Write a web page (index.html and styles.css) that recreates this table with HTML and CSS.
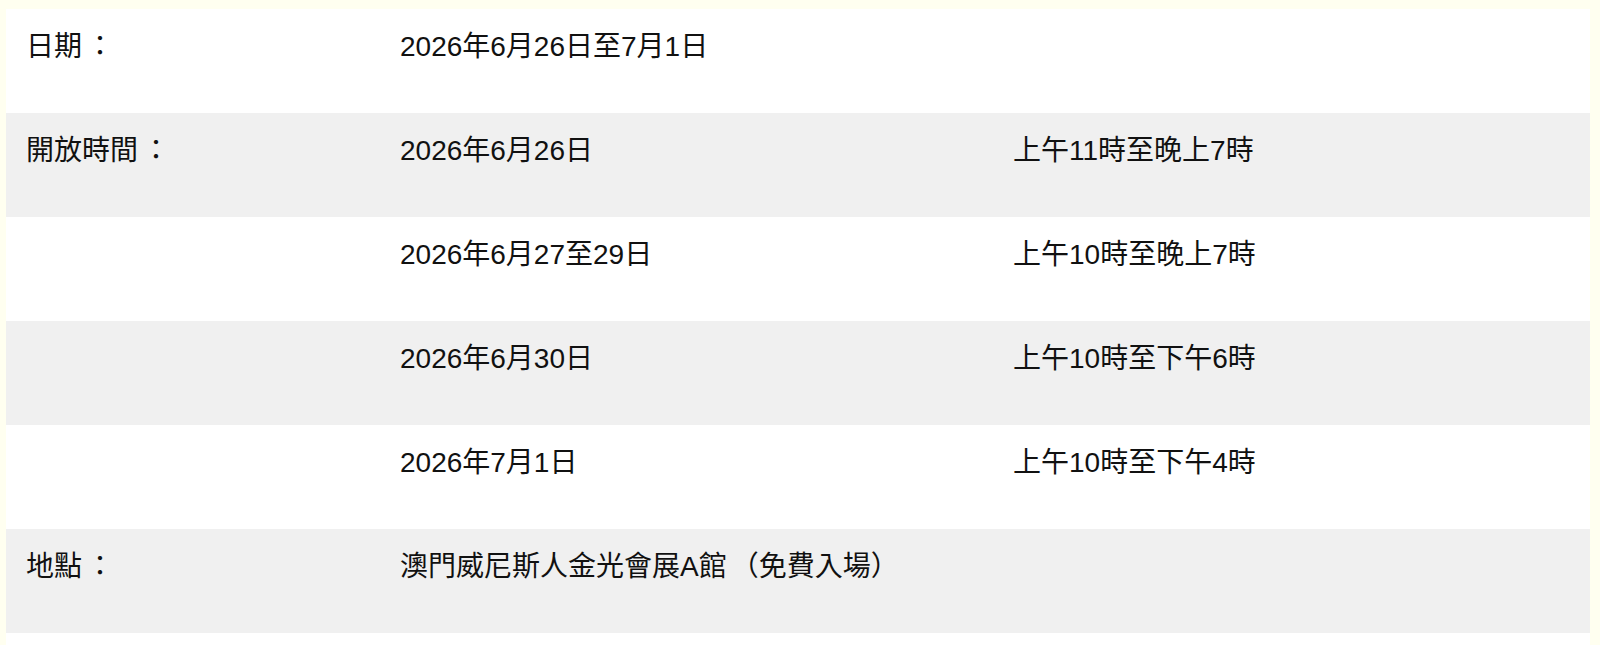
FILE: index.html
```html
<!DOCTYPE html>
<html lang="zh-Hant">
<head>
<meta charset="utf-8">
<title>展覽資料</title>
<link rel="stylesheet" href="styles.css">
</head>
<body>
<div class="info">
  <div class="row">
    <div class="cell label">日期<span class="colon">：</span></div>
    <div class="cell">2026年6月26日至7月1日</div>
    <div class="cell"></div>
  </div>
  <div class="row alt">
    <div class="cell label">開放時間<span class="colon">：</span></div>
    <div class="cell">2026年6月26日</div>
    <div class="cell">上午11時至晚上7時</div>
  </div>
  <div class="row">
    <div class="cell label"></div>
    <div class="cell">2026年6月27至29日</div>
    <div class="cell">上午10時至晚上7時</div>
  </div>
  <div class="row alt">
    <div class="cell label"></div>
    <div class="cell">2026年6月30日</div>
    <div class="cell">上午10時至下午6時</div>
  </div>
  <div class="row">
    <div class="cell label"></div>
    <div class="cell">2026年7月1日</div>
    <div class="cell">上午10時至下午4時</div>
  </div>
  <div class="row alt">
    <div class="cell label">地點<span class="colon">：</span></div>
    <div class="cell">澳門威尼斯人金光會展A館<span class="paren">（</span>免費入場）</div>
    <div class="cell"></div>
  </div>
  <div class="row">
    <div class="cell label"></div>
    <div class="cell"></div>
    <div class="cell"></div>
  </div>
</div>
</body>
</html>
```
FILE: styles.css
```css
html, body {
  margin: 0;
  padding: 0;
}
body {
  background: #fffff0;
  padding: 9px 10px 0 6px;
  font-family: "Liberation Sans", "Noto Sans CJK TC", sans-serif;
  color: #111111;
  overflow: hidden;
  height: 645px;
  box-sizing: border-box;
}
.info {
  width: 1584px;
  display: flex;
  flex-direction: column;
}
.row {
  display: grid;
  grid-template-columns: 374px 613px 597px;
  height: 104px;
  flex: none;
  background: #ffffff;
}
.row.alt {
  background: #f0f0f0;
}
.cell {
  padding: 20px 20px 0 20px;
  font-size: 28px;
  line-height: 36px;
  white-space: nowrap;
}
.colon {
  display: inline-block;
  width: 28px;
  text-align: center;
  margin-left: 4px;
}
.paren {
  margin-left: 4px;
}
```
